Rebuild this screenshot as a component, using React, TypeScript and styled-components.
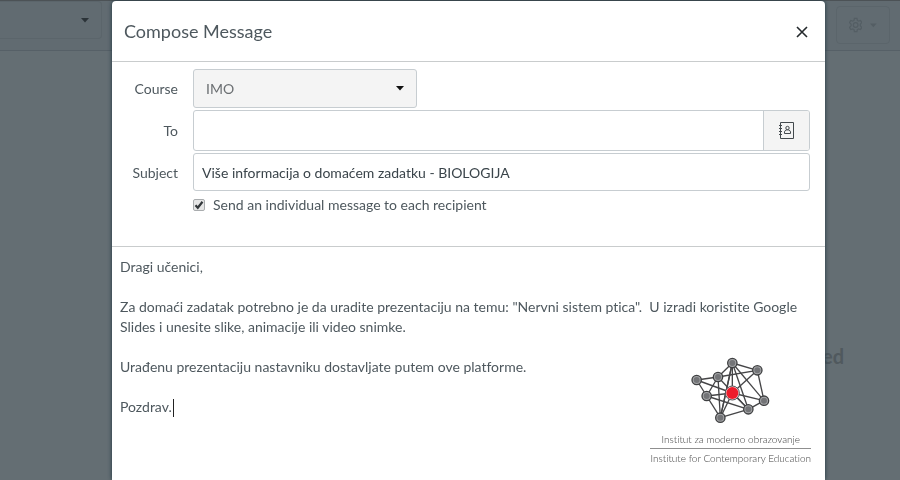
import React from "react";
import styled, { createGlobalStyle, css } from "styled-components";

const GlobalStyle = createGlobalStyle`
  *, *::before, *::after { box-sizing: border-box; }
  html, body, #root { height: 100%; }
  body {
    margin: 0;
    overflow: hidden;
    background: #646e73;
    color: #4e585e;
    font: 14px/20px Lato, sans-serif;
    font-variant-ligatures: none;
  }
  button, input, select, textarea {
    font: inherit;
    font-variant-ligatures: none;
    color: inherit;
    margin: 0;
  }
`;

const Page = styled.div`
  min-height: 100%;
  display: flex;
  flex-direction: column;
  border-top: 1px solid #4c5256;
`;

const Toolbar = styled.header`
  display: flex;
  justify-content: space-between;
  height: 50px;
  border-bottom: 1px solid #566067;
  padding: 0 10px 0 0;
  background: #616b71;
`;

const ToolButton = styled.button<{ $wide?: boolean }>`
  display: flex;
  align-items: center;
  justify-content: ${(p) => (p.$wide ? "flex-end" : "center")};
  gap: 8px;
  width: ${(p) => (p.$wide ? 102 : 54)}px;
  height: 38px;
  margin-top: ${(p) => (p.$wide ? 0 : 5)}px;
  padding: 0 12px;
  border: 1px solid #5b656b;
  border-left-width: ${(p) => (p.$wide ? 0 : 1)}px;
  border-radius: ${(p) => (p.$wide ? "0 4px 4px 0" : "4px")};
  background: #616b71;
  color: ${(p) => (p.$wide ? "#2b3338" : "#545e64")};
`;

const EmptyState = styled.main`
  flex: 1;
  display: flex;
  justify-content: flex-end;
  padding: 293px 56px 0 0;
`;

const EmptyTitle = styled.h2`
  margin: 0;
  font-size: 20px;
  line-height: 24px;
  font-weight: 700;
  color: #50595e;
`;

const Overlay = styled.div`
  position: fixed;
  inset: 0;
  display: flex;
  padding: 1px 75px 0 112px;
`;

const Dialog = styled.section`
  flex: 1;
  display: flex;
  flex-direction: column;
  min-width: 0;
  border-radius: 4px 4px 0 0;
  background: #fff;
  box-shadow: 0 0 4px #1f3540;
`;

const DialogHeader = styled.header`
  display: flex;
  align-items: center;
  justify-content: space-between;
  height: 61px;
  padding: 0 17px 0 12px;
  border-bottom: 1px solid #c9cccd;
`;

const Title = styled.h1`
  margin: 0;
  font-size: 18px;
  line-height: 24px;
  font-weight: 400;
`;

const CloseButton = styled.button`
  display: flex;
  padding: 2px 0 0;
  border: 0;
  background: none;
`;

const Form = styled.form`
  display: grid;
  grid-template-columns: 66px minmax(0, 1fr);
  column-gap: 15px;
  row-gap: 2px;
  align-items: center;
  padding: 7px 15px 31px 0;
  border-bottom: 1px solid #c9cccd;
`;

const Label = styled.label`
  padding-top: 1px;
  text-align: right;
`;

const field = css`
  border: 1px solid #c7cdd1;
  border-radius: 3px;
  background: #fff;
  outline: none;
`;

const SelectWrap = styled.div`
  position: relative;
  width: 224px;
`;

const Select = styled.select`
  ${field}
  display: block;
  appearance: none;
  width: 100%;
  height: 39px;
  padding: 0 30px 0 12px;
  background: #f4f4f4;
  color: #6b6f72;
`;

const SelectArrow = styled.span`
  position: absolute;
  right: 13px;
  top: 17px;
  display: flex;
  color: #111;
  pointer-events: none;
`;

const InputGroup = styled.div`
  ${field}
  display: flex;
  height: 41px;
  overflow: hidden;
`;

const GroupInput = styled.input`
  flex: 1;
  min-width: 0;
  padding: 0 8px;
  border: 0;
  outline: none;
  background: none;
`;

const AddressButton = styled.button`
  display: flex;
  align-items: center;
  justify-content: center;
  width: 46px;
  padding: 0;
  border: 0;
  border-left: 1px solid #c7cdd1;
  background: #f4f4f4;
`;

const TextInput = styled.input`
  ${field}
  width: 100%;
  height: 38px;
  padding: 0 8px;
  color: #3a444a;
`;

const CheckLabel = styled.label`
  grid-column: 2;
  display: flex;
  align-items: center;
  gap: 8px;
  padding-top: 2px;
`;

const CheckWrap = styled.span`
  position: relative;
  display: flex;
  width: 12px;
  height: 12px;
`;

const Checkbox = styled.input`
  appearance: none;
  width: 12px;
  height: 12px;
  border: 1px solid #a9acae;
  border-radius: 2px;
  background: #e6e6e6;
  & + svg { visibility: hidden; }
  &:checked + svg { visibility: visible; }
`;

const CheckMark = styled.svg`
  position: absolute;
  inset: 0;
  pointer-events: none;
`;

const Editor = styled.div`
  position: relative;
  flex: 1;
  display: flex;
`;

const Message = styled.textarea`
  flex: 1;
  padding: 10px 8px;
  border: 0;
  outline: none;
  resize: none;
  overflow: hidden;
  background: none;
`;

const TextCaret = styled.span`
  position: absolute;
  left: 61px;
  top: 152px;
  width: 1px;
  height: 18px;
  background: #222;
`;

const Brand = styled.figure`
  position: absolute;
  right: 14px;
  top: 110px;
  display: flex;
  flex-direction: column;
  align-items: center;
  margin: 0;
  pointer-events: none;
  color: #3d3d3d;
  font-size: 10px;
  line-height: 18px;
  font-weight: 300;
  white-space: nowrap;
`;

const BrandLocal = styled.span`
  align-self: stretch;
  padding-top: 6px;
  border-bottom: 1px solid #8f8f8f;
  text-align: center;
`;

const Arrow = () => (
  <svg width="8" height="5" viewBox="0 0 8 5" aria-hidden="true">
    <path d="M0 0h8L4 4.500z" fill="currentColor" />
  </svg>
);

const nodes: [number, number][] = [
  [334, 54], [409, 76], [291, 96], [227, 105], [257, 153], [429, 167], [382, 193], [298, 218],
];
const hub: [number, number] = [334, 144];
const links: [number, number][] = [
  [0, 1], [0, 2], [0, 5], [0, 6], [0, 7], [1, 2], [1, 5], [2, 3],
  [2, 4], [2, 7], [3, 4], [4, 7], [4, 6], [5, 6], [6, 7],
];
const spokes = [0, 1, 3, 4, 5, 6, 7];

const Network = () => (
  <svg width="80" height="67" viewBox="210 36 240 201" aria-hidden="true">
    <g stroke="#454547" strokeWidth="4">
      {links.map(([a, b]) => (
        <line key={`${a}-${b}`} x1={nodes[a][0]} y1={nodes[a][1]} x2={nodes[b][0]} y2={nodes[b][1]} />
      ))}
      {spokes.map((n) => (
        <line key={n} x1={hub[0]} y1={hub[1]} x2={nodes[n][0]} y2={nodes[n][1]} />
      ))}
      <line x1="291" y1="96" x2="382" y2="193" />
      <line x1="334" y1="54" x2="302" y2="200" />
    </g>
    {nodes.map(([x, y]) => (
      <g key={`${x}-${y}`}>
        <circle cx={x} cy={y} r="14" fill="#a5a6a8" stroke="#3f4042" strokeWidth="4" />
        <circle cx={x} cy={y} r="9" fill="#737477" />
      </g>
    ))}
    <circle cx={hub[0]} cy={hub[1]} r="21" fill="#f2d6d6" stroke="#55565a" strokeWidth="3" />
    <circle cx={hub[0]} cy={hub[1]} r="18" fill="#ed1c2b" />
  </svg>
);

const text = `Dragi učenici,

Za domaći zadatak potrebno je da uradite prezentaciju na temu: "Nervni sistem ptica".  U izradi koristite Google Slides i unesite slike, animacije ili video snimke.

Urađenu prezentaciju nastavniku dostavljate putem ove platforme.

Pozdrav.`;

export default function App() {
  return (
    <>
      <GlobalStyle />
      <Page>
        <Toolbar>
          <ToolButton $wide aria-label="Filter">
            <Arrow />
          </ToolButton>
          <ToolButton aria-label="Settings">
            <svg width="16" height="18" viewBox="0 0 16 18" fill="none" stroke="currentColor" strokeWidth="1.5" aria-hidden="true">
              <path d="M6.500 1h3l.5 2.500 1.500.9 2.400-.9 1.400 2.600L13.500 8v2l1.800 1.900-1.400 2.600-2.400-.9-1.500.9-.5 2.500h-3L6 14.500l-1.500-.9-2.400.9L.7 11.900 2.500 10V8L.7 6.100l1.400-2.600 2.400.9L6 3.500z" />
              <circle cx="8" cy="9" r="2.800" />
            </svg>
            <Arrow />
          </ToolButton>
        </Toolbar>
        <EmptyState>
          <EmptyTitle>ed</EmptyTitle>
        </EmptyState>
      </Page>
      <Overlay>
        <Dialog role="dialog" aria-labelledby="compose-title">
          <DialogHeader>
            <Title id="compose-title">Compose Message</Title>
            <CloseButton aria-label="Close">
              <svg width="12" height="12" viewBox="0 0 12 12" stroke="#24292c" strokeWidth="1.6" aria-hidden="true">
                <path d="M1 1l10 10M11 1L1 11" />
              </svg>
            </CloseButton>
          </DialogHeader>
          <Form>
            <Label htmlFor="course">Course</Label>
            <SelectWrap>
              <Select id="course" defaultValue="IMO">
                <option>IMO</option>
              </Select>
              <SelectArrow>
                <Arrow />
              </SelectArrow>
            </SelectWrap>
            <Label htmlFor="to">To</Label>
            <InputGroup>
              <GroupInput id="to" />
              <AddressButton type="button" aria-label="Address book">
                <svg width="15" height="17" viewBox="0 0 15 17" fill="none" stroke="#43494d" aria-hidden="true">
                  <path d="M1.500 .5h13v16h-13z" />
                  <path d="M0 3.500h3M0 6.500h3M0 9.500h3M0 12.500h3" />
                  <circle cx="8.500" cy="6" r="1.700" />
                  <path d="M5.500 11.500c-.5-2.500 1-3.700 3-3.700s3.500 1.200 3 3.700z" />
                </svg>
              </AddressButton>
            </InputGroup>
            <Label htmlFor="subject">Subject</Label>
            <TextInput id="subject" defaultValue="Više informacija o domaćem zadatku - BIOLOGIJA" />
            <CheckLabel>
              <CheckWrap>
                <Checkbox type="checkbox" defaultChecked />
                <CheckMark viewBox="0 0 12 12" fill="none" stroke="#33383b" strokeWidth="2.2" aria-hidden="true">
                  <path d="M2.500 6.200l2.300 2.600L9.500 2.800" />
                </CheckMark>
              </CheckWrap>
              Send an individual message to each recipient
            </CheckLabel>
          </Form>
          <Editor>
            <Message aria-label="Message" defaultValue={text} spellCheck={false} />
            <TextCaret />
            <Brand>
              <Network />
              <BrandLocal>Institut za moderno obrazovanje</BrandLocal>
              <span>Institute for Contemporary Education</span>
            </Brand>
          </Editor>
        </Dialog>
      </Overlay>
    </>
  );
}
